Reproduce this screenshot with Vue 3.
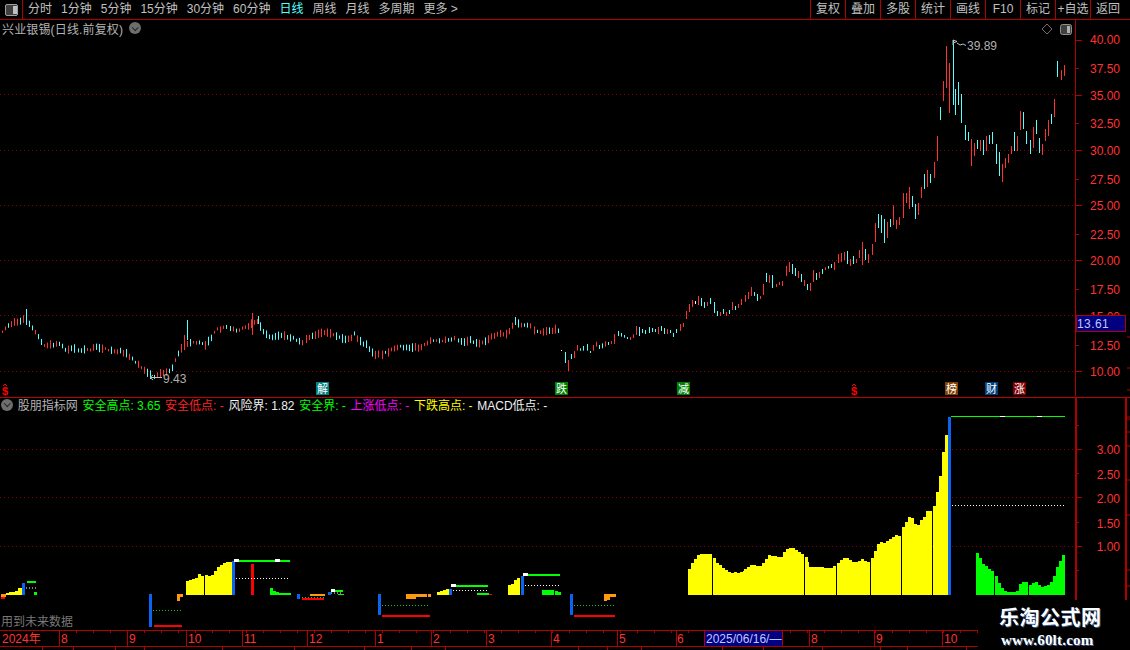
<script setup>
const menu = [
  { t: '分时' }, { t: '1分钟' }, { t: '5分钟' }, { t: '15分钟' }, { t: '30分钟' }, { t: '60分钟' },
  { t: '日线', on: true }, { t: '周线' }, { t: '月线' }, { t: '多周期' }, { t: '更多 >' }
]
const tools = ['复权', '叠加', '多股', '统计', '画线', 'F10', '标记', '+自选', '返回']
const legend = [
  { t: '安全高点: 3.65', c: 'g' }, { t: '安全低点: -', c: 'r' }, { t: '风险界: 1.82', c: 'w' },
  { t: '安全界: -', c: 'g' }, { t: '上涨低点: -', c: 'm' }, { t: '下跌高点: -', c: 'y' }, { t: 'MACD低点: -', c: 'w' }
]
const RED = '#ff3232', CY = '#54ffff'

// left part of the price line: key points, filled in candle by candle
const keys = [[1,332],[8,325],[15,322],[22,321],[26,316],[29,323],[33,330],[38,337],[44,346],[52,345],[60,344],[66,350],[72,348],[80,351],[90,349],[98,347],[108,350],[118,351],[125,353],[133,360],[140,366],[148,373],[155,377],[160,373],[167,372],[172,367],[177,355],[183,345],[190,343],[200,342],[206,345],[216,330],[226,327],[236,330],[245,328],[252,324],[258,322],[262,330],[270,338],[278,335],[290,337],[302,342],[310,337],[320,334],[330,333],[340,338],[350,340],[354,334],[360,342],[366,345],[372,352],[376,355],[382,354],[392,350],[400,347],[410,347],[420,348],[432,340],[445,340],[455,338],[462,342],[470,340],[480,345],[490,337],[500,333],[505,335],[510,330],[515,321],[522,326],[530,326],[535,332],[540,332],[550,330],[558,330]]
function centre(x) {
  for (let i = 1; i < keys.length; i++) {
    if (x <= keys[i][0]) {
      const [a, b] = [keys[i - 1], keys[i]]
      return a[1] + (b[1] - a[1]) * (x - a[0]) / (b[0] - a[0])
    }
  }
  return keys[keys.length - 1][1]
}
let seed = 7
const rnd = () => (seed = (seed * 16807) % 2147483647) / 2147483647
const candles = []
for (let i = 0; i * 3.04 + 1.5 < 560; i++) {
  const x = Math.round(i * 3.04 + 1.5)
  const m = centre(x), up = centre(x + 3) < m
  const h = 1.2 + rnd() * 3.3
  const off = (rnd() - 0.5) * 2
  candles.push({ x, t: m + off - h, b: m + off + h, c: rnd() < (up ? 0.7 : 0.35) ? RED : CY })
}
const spikes = [[26, 309, 325, CY], [184, 335, 350, RED], [187, 320, 340, CY], [252, 313, 335, RED], [258, 316, 324, CY], [515, 317, 325, CY]]
spikes.forEach(s => candles.push({ x: s[0], t: s[1], b: s[2], c: s[3] }))

const a = [[561,350,351,'#fff'],[565,352,363,CY],[568,360,371,RED],[571,354,359,CY],[574,351,358,RED]]
a.forEach(s => candles.push({ x: s[0], t: s[1], b: s[2], c: s[3] }))
const z8 = `112,195,212,r 121,205,212,c 130,198,212,c 142,192,212,c 151,213,219,c 160,195,212,r 169,185,200,r 178,195,207,c 187,190,205,c 196,184,200,r 205,186,195,c 214,183,192,r 223,162,192,r 235,153,168,c 244,159,170,c 253,165,173,c 262,171,177,c 271,171,180,r 280,163,174,r 289,138,165,r 298,141,168,c 307,147,159,c 316,150,162,c 328,141,159,c 337,144,156,c 346,147,156,c 355,141,162,r 364,138,153,c 373,144,162,c 382,147,162,r 391,150,159,c 400,159,171,c 409,147,159,c 421,132,153,r 430,129,141,r 439,93,117,r 448,72,96,r 457,60,81,r 466,63,72,w 475,48,75,r 484,54,78,c 493,66,84,c 502,66,78,r 511,54,72,c 523,66,99,c 532,93,108,c 541,96,108,r 550,87,102,c 559,96,108,r 568,90,102,c 577,66,90,r 586,78,90,c 595,72,84,r 604,57,75,r 616,45,66,r 625,36,57,r 634,21,48,r 643,36,48,c 652,42,63,c 661,48,57,r 670,12,45,r 679,-21,6,c 688,-15,9,r 697,-15,24,c 709,12,21,r 718,6,15,r 727,3,18,r`
const colourOf = { r: RED, c: CY, w: '#fff' }
z8.split(' ').forEach(s => {
  const [x, t, b, c] = s.split(',')
  candles.push({ x: Math.round(540 + x / 3), t: 280 + t / 3, b: 280 + b / 3, c: colourOf[c] })
})
const mid = `786,266,276,r 789,262,272,r 792,264,274,c 795,268,276,c 798,271,278,r 801,274,282,c 804,280,286,r 807,284,290,c 810,283,291,r 813,270,282,r 816,273,280,c 819,272,278,r 822,269,274,c`
mid.split(' ').forEach(s => {
  const [x, t, b, c] = s.split(',')
  candles.push({ x: +x, t: +t, b: +b, c: colourOf[c] })
})
const z9 = `16,412,420,r 25,408,416,c 34,402,414,c 43,396,420,r 55,372,399,r 64,369,396,r 73,366,390,r 82,363,402,c 91,387,408,r 100,378,402,c 109,387,399,r 118,360,384,r 127,336,405,r 136,357,390,c 145,372,399,r 157,342,375,r 166,279,336,r 175,252,294,c 184,255,309,c 193,267,339,c 202,276,324,r 211,267,291,c 220,226,285,r 229,270,297,r 238,261,285,r 250,189,264,r 259,189,219,r 268,171,237,r 277,198,231,c 286,222,267,c 295,219,255,r 304,171,204,r 313,132,177,c 322,120,171,r 331,132,159,c 343,96,144,r 352,18,93,r 436,-15,30,c 445,6,33,c 454,27,108,r 463,39,78,r 472,30,57,c 481,30,63,r 490,30,75,c 499,18,63,r 508,15,42,c 517,6,42,c 529,42,102,c 538,66,138,c 547,102,156,r 556,84,114,r 565,72,99,r 574,48,72,r 583,6,63,c 592,18,63,r 619,3,42,c 631,30,72,c 640,-9,54,r 649,-30,12,c 658,24,69,c 667,42,75,r 676,-3,33,r 685,-30,18,r`
z9.split(' ').forEach(s => {
  const [x, t, b, c] = s.split(',')
  candles.push({ x: Math.round(820 + x / 3), t: 130 + t / 3, b: 130 + b / 3, c: colourOf[c] })
})
const top = `940,107,120,c 943,81,101,r 946,46,88,r 949,63,113,r 953,40,105,c 955,89,115,c 958,82,105,c 961,94,123,c 1020,111,130,r 1023,112,129,c 1057,61,77,c 1061,70,80,r 1064,65,76,r 1051,114,124,c 1054,99,117,r`
top.split(' ').forEach(s => {
  const [x, t, b, c] = s.split(',')
  candles.push({ x: +x, t: +t, b: +b, c: colourOf[c] })
})

const priceGrid = [94.5, 150.5, 205.5, 260.5, 315.5, 371.5]
const prices = [['40.00',39.5],['37.50',68],['35.00',95],['32.50',123],['30.00',150],['27.50',179],['25.00',205],['22.50',234],['20.00',260],['17.50',289],['15.00',316],['12.50',345],['10.00',371]]
const badges = [
  { x: 316, w: 13, t: '解', bg: '#008080' }, { x: 555, w: 13, t: '跌', bg: '#008000' },
  { x: 677, w: 13, t: '减', bg: '#008000' }, { x: 945, w: 13, t: '榜', bg: '#804000' },
  { x: 985, w: 13, t: '财', bg: '#004080' }, { x: 1013, w: 13, t: '涨', bg: '#800000' }
]

// lower panel: columns as [x, top]
const step = (x0, tops, dx = 3.04) => tops.map((t, i) => [Math.round(x0 + i * dx), t])
const yellow = [
  ...step(3, [594, 593, 592, 592, 591, 588, 588]),
  ...step(186, [581, 580, 579, 578, 574, 576]),
  ...step(205, [575, 576, 575, 571, 567, 565, 563, 562, 562]),
  ...step(437, [592, 591, 590, 589]),
  ...step(508, [585, 584, 580, 578]),
  ...step(688, [569, 563, 559, 555, 554, 554, 554, 554]),
  ...step(713, [558, 563, 565, 568, 570, 572, 573, 572, 573, 572, 571]),
  ...step(744, [569, 567, 565, 565, 566, 566, 563]),
  ...step(765, [559, 555, 556, 556, 557, 557, 552, 549, 548, 548, 550, 552, 554, 557]),
  ...step(806, [562, 567, 567, 567, 567, 567, 568, 568, 568, 566]),
  ...step(837, [563, 560, 558, 558, 560, 562, 562, 561, 559, 561, 562]),
  ...step(871, [558, 551, 544, 542, 543, 541, 539, 537, 535, 536]),
  ...step(902, [527, 522, 517, 518, 524, 525, 520, 517, 511, 511]),
  ...step(933, [506, 492, 476, 452, 435])
]
const green = [
  ...step(270, [588, 591, 592, 593, 593, 593, 593]),
  ...step(542, [590, 590, 590, 590]), ...step(555, [591, 592]),
  ...step(976, [553, 558, 564, 566, 569, 571]),
  ...step(995, [576, 583, 588, 591, 592, 592, 592, 591, 584, 582, 582]),
  ...step(1029, [585, 583, 582, 585, 587, 586, 585, 582, 576, 567, 561, 555])
]
const blocks = [
  [22, 583, 3, 12, '#0a64f0'], [232, 561, 3, 34, '#0a64f0'], [297, 594, 3, 5, '#0a64f0'], [328, 592, 3, 3, '#0a64f0'],
  [149, 594, 3, 33, '#0a64f0'], [378, 594, 3, 21, '#0a64f0'], [449, 589, 3, 6, '#0a64f0'], [521, 576, 3, 19, '#0a64f0'],
  [570, 594, 3, 21, '#0a64f0'], [948, 417, 3, 178, '#0a64f0'],
  [251, 564, 3, 31, '#ff0000'], [154, 625, 28, 2, '#ff0000'], [382, 615, 48, 2, '#ff0000'], [574, 615, 41, 2, '#ff0000'],
  [302, 598, 22, 2, '#ff0000'], [1, 597, 4, 2, '#ff0000'], [488, 594, 4, 1, '#ff0000'],
  [27, 581, 9, 2, '#00ff00'], [34, 592, 3, 3, '#00ff00'], [236, 560, 54, 2, '#00ff00'], [334, 590, 9, 2, '#00ff00'], [338, 594, 6, 1, '#00ff00'],
  [453, 585, 35, 2, '#00ff00'], [477, 593, 12, 2, '#00ff00'], [525, 574, 35, 2, '#00ff00'], [951, 416, 114, 1, '#00ff00'],
  [1, 594, 5, 3, '#ff9a10'], [177, 594, 6, 3, '#ff9a10'], [177, 597, 3, 4, '#ff9a10'], [310, 594, 15, 2, '#ff9a10'],
  [406, 594, 21, 3, '#ff9a10'], [406, 597, 10, 2, '#ff9a10'], [428, 594, 3, 3, '#ff9a10'],
  [604, 594, 12, 3, '#ff9a10'], [604, 597, 6, 3, '#ff9a10'], [604, 600, 3, 1, '#ff9a10'],
  [234, 559, 5, 3, '#fff'], [275, 559, 5, 3, '#fff'], [331, 589, 4, 3, '#fff'], [451, 584, 5, 3, '#fff'], [523, 573, 5, 3, '#fff'],
  [1000, 416, 5, 1, '#fff'], [1037, 416, 5, 1, '#fff']
]
const dots = [
  [26, 36, 588, '#fff'], [236, 290, 578.5, '#fff'], [331, 343, 593, '#fff'], [453, 488, 590.5, '#fff'], [525, 560, 585.5, '#fff'], [952, 1065, 505.5, '#fff'],
  [153, 182, 610.5, '#20c020'], [302, 324, 597.5, '#20c020'], [382, 430, 605.5, '#20c020'], [574, 615, 605.5, '#20c020']
]
const lowGrid = [449.5, 497.5, 546.5]
const lowPrices = [['3.00', 449], ['2.50', 474], ['2.00', 498], ['1.50', 523], ['1.00', 546]]
const lowTicks = [[449.5, 6], [473.5, 3], [497.5, 6], [522.5, 3], [546.5, 6], [570.5, 3], [425.5, 3]]
const dividers = [59, 127, 186, 242, 307, 375, 431, 486, 551, 617, 676, 704, 782, 809, 874, 942]
const months = [['2024年', 2], ['8', 61], ['9', 129], ['10', 188], ['11', 244], ['12', 309], ['1', 377], ['2', 433], ['3', 488], ['4', 553], ['5', 619], ['6', 677], ['8', 811], ['9', 876], ['10', 944]]
const minors = []
for (let x = 76; x < 978; x += 17) minors.push(x)
const under = [42, 73, 115, 144, 222, 294, 364, 411, 445, 578, 607, 641, 722, 763, 822, 880, 907, 966]
</script>

<template>
  <div class="screen">
    <header class="topbar">
      <div class="toggle"><span class="panel-icon"><i></i></span></div>
      <nav class="menu">
        <span v-for="m in menu" :key="m.t" :class="{ on: m.on }">{{ m.t }}</span>
      </nav>
      <div class="tools">
        <span v-for="t in tools" :key="t" class="tool">{{ t }}</span>
      </div>
    </header>

    <section class="panel main">
      <svg width="1130" height="377" viewBox="0 20 1130 377" class="chart">
        <line v-for="y in priceGrid" :key="y" x1="0" x2="1076" :y1="y" :y2="y" class="grid" />
        <line v-for="c in candles" :key="c.x + '-' + c.t" :x1="c.x + .5" :x2="c.x + .5" :y1="c.t" :y2="c.b" :stroke="c.c" stroke-width="1" />
        <line x1="1075.5" x2="1075.5" y1="20" y2="396" class="axis" />
        <g v-for="(p, i) in prices" :key="p[0]">
          <line x1="1076" :x2="i % 2 ? 1079 : 1082" :y1="Math.round(p[1]) + .5" :y2="Math.round(p[1]) + .5" class="axis" />
          <text x="1120" :y="p[1] + 4.5" text-anchor="end" class="tick">{{ p[0] }}</text>
        </g>
        <path d="M1127 337h3M1127 368h3M1127 390h3" class="axis" />

        <rect x="1076.5" y="315.5" width="49" height="16" fill="#000080" stroke="#b00000" />
        <text x="1077" y="328" class="last">13.61</text>

        <path d="M953 45v-5l4 1.5-4 1.5M957 43l3 2 3-1 3 1.5" class="flag" />
        <text x="967" y="50" class="note">39.89</text>
        <path d="M162 377.5h-12m3-2.500-3 2.500 3 2.500" class="flag" />
        <text x="163" y="383" class="note">9.43</text>

        <path d="M3 386l2-2 2 2M852 386l2-2 2 2" fill="none" stroke="#ff0000" />
        <text x="2" y="395" class="dollar">$</text>
        <text x="851" y="395" class="dollar">$</text>
        <g v-for="b in badges" :key="b.t">
          <rect :x="b.x" y="382" :width="b.w" height="13" :fill="b.bg" />
          <text :x="b.x + b.w / 2" y="393" text-anchor="middle" class="badge">{{ b.t }}</text>
        </g>

        <path d="M1047 24l5 5-5 5-5-5z" fill="none" stroke="#707070" />
        <rect x="1060.500" y="24.500" width="11" height="10" rx="2" fill="#404040" stroke="#909090" />
        <rect x="1067" y="26" width="3" height="7" fill="#b0b0b0" />
      </svg>
      <div class="title">
        <span>兴业银锡(日线.前复权)</span>
        <span class="chev"></span>
      </div>
    </section>

    <section class="panel lower">
      <svg width="1130" height="253" viewBox="0 397 1130 253" class="chart">
        <rect y="397" width="1130" height="1" fill="#c00000" x="0" />
        <line v-for="y in lowGrid" :key="y" x1="0" x2="1076" :y1="y" :y2="y" class="grid" />
        <rect v-for="b in yellow" :key="'y' + b[0]" :x="b[0]" :y="b[1]" width="3" :height="595 - b[1]" fill="#ffff00" />
        <rect v-for="b in green" :key="'g' + b[0]" :x="b[0]" :y="b[1]" width="3" :height="595 - b[1]" fill="#00ff00" />
        <rect v-for="(b, i) in blocks" :key="'b' + i" :x="b[0]" :y="b[1]" :width="b[2]" :height="b[3]" :fill="b[4]" />
        <line v-for="(d, i) in dots" :key="'d' + i" :x1="d[0]" :x2="d[1]" :y1="d[2]" :y2="d[2]" :stroke="d[3]" stroke-dasharray="1 2" />

        <rect x="1075" y="397" width="2" height="203" fill="#b00000" />
        <rect x="1125" y="397" width="2" height="203" fill="#b00000" />
        <g v-for="p in lowPrices" :key="p[0]">
          <text x="1120" :y="p[1] + 4.500" text-anchor="end" class="tick">{{ p[0] }}</text>
        </g>
        <line v-for="t in lowTicks" :key="t[0]" x1="1076" :x2="1076 + t[1]" :y1="t[0]" :y2="t[0]" class="axis" />
        <path d="M1127 417h3M1127 419h3M1127 432h3M1127 446h3M1127 480h3M1127 515h3M1127 570h3M1127 586h3" class="axis" />

        <text x="1" y="626" class="hint">用到未来数据</text>

        <line x1="0" x2="978" y1="630.500" y2="630.500" class="axis" />
        <line x1="0" x2="978" y1="646.500" y2="646.500" class="axis" />
        <line v-for="x in dividers" :key="'v' + x" :x1="x + .5" :x2="x + .5" y1="630" y2="646" class="axis" />
        <line v-for="x in minors" :key="'m' + x" :x1="x + .5" :x2="x + .5" y1="630" y2="633" class="axis" />
        <line v-for="x in under" :key="'u' + x" :x1="x + .5" :x2="x + .5" y1="646" y2="650" class="axis" />
        <text v-for="m in months" :key="m[0] + m[1]" :x="m[1]" y="643" class="tick">{{ m[0] }}</text>
        <rect x="705" y="631" width="77" height="15" fill="#000080" />
        <text x="706" y="643" class="stamp">2025/06/16/—</text>
      </svg>
      <div class="legend">
        <span class="chev"></span>
        <span class="name">股朋指标网</span>
        <span v-for="l in legend" :key="l.t" :class="l.c">{{ l.t }}</span>
      </div>
    </section>

    <aside class="mark">
      <strong>乐淘公式网</strong>
      <em>www.60lt.com</em>
    </aside>
  </div>
</template>

<style>
html, body { margin: 0; background: #000; }
</style>

<style scoped>
.screen {
  position: relative;
  width: 1130px;
  height: 650px;
  overflow: hidden;
  background: #000;
  color: #c0c0c0;
  font: 12px "Liberation Sans", "Noto Sans CJK SC", sans-serif;
}
.topbar {
  display: flex;
  height: 19px;
  border-bottom: 1px solid #b00000;
  line-height: 19px;
}
.toggle {
  width: 23px;
  box-sizing: border-box;
  border-right: 1px solid #b00000;
  display: flex;
  align-items: center;
  justify-content: center;
}
.panel-icon {
  display: block;
  position: relative;
  width: 11px;
  height: 10px;
  border: 1px solid #a0a0a0;
  border-radius: 2px;
  background: #404040;
}
.panel-icon i {
  position: absolute;
  right: 0;
  top: 1px;
  width: 4px;
  height: 8px;
  background: #c0c0c0;
}
.menu {
  display: flex;
  gap: 9px;
  margin-left: 5px;
  flex: 1;
}
.menu .on { color: #54ffff; }
.tools {
  display: flex;
  width: 320px;
}
.tool {
  flex: 0 0 35px;
  box-sizing: border-box;
  border-left: 1px solid #b00000;
  text-align: center;
}
.tool:last-child {
  flex: 1;
  padding-right: 5px;
}
.panel { position: relative; }
.main { height: 377px; }
.lower { height: 253px; }
.chart { display: block; }
.grid { stroke: #8c0000; stroke-dasharray: 1 3; shape-rendering: crispEdges; }
.axis { stroke: #b00000; fill: none; }
.tick { fill: #ff3232; font-size: 12px; font-family: "Liberation Sans", "Noto Sans CJK SC", sans-serif; }
.last { fill: #c0c8ff; font-size: 12px; letter-spacing: .4px; font-family: "Liberation Sans", sans-serif; }
.stamp { fill: #c0c8ff; font-size: 12px; font-family: "Liberation Sans", "Noto Sans CJK SC", sans-serif; }
.note { fill: #b0b0b0; font-size: 12px; font-family: "Liberation Sans", sans-serif; }
.hint { fill: #787878; font-size: 12px; font-family: "Noto Sans CJK SC", sans-serif; }
.flag { fill: none; stroke: #c0c0c0; }
.dollar { fill: #ff0000; font-size: 11px; font-weight: 700; font-family: "Liberation Sans", sans-serif; }
.badge { fill: #fff; font-size: 11px; font-family: "Noto Sans CJK SC", sans-serif; }
.title {
  position: absolute;
  left: 2px;
  top: -1px;
  display: flex;
  align-items: center;
  gap: 6px;
  height: 18px;
  color: #b4b4b4;
  font-size: 12px;
  letter-spacing: .15px;
}
.chev {
  position: relative;
  display: inline-block;
  width: 12px;
  height: 12px;
  border-radius: 50%;
  background: #6e6e6e;
}
.chev::after {
  content: "";
  position: absolute;
  left: 3.500px;
  top: 2.500px;
  width: 3.500px;
  height: 3.500px;
  border-right: 1.500px solid #202020;
  border-bottom: 1.500px solid #202020;
  transform: rotate(45deg);
}
.legend {
  position: absolute;
  left: 1px;
  top: 0;
  display: flex;
  align-items: center;
  gap: 4.700px;
  height: 15px;
  white-space: nowrap;
}
.legend .name { color: #b4b4b4; }
.g { color: #00ff00; }
.r { color: #ff2020; }
.w { color: #f0f0f0; }
.m { color: #ff00ff; }
.y { color: #ffff00; }
.mark {
  position: absolute;
  left: 978px;
  top: 600px;
  width: 152px;
  height: 50px;
  background: #000;
  color: #fff;
}
.mark strong {
  position: absolute;
  left: 21px;
  top: 5px;
  letter-spacing: .5px;
  font: 700 20px/24px "Noto Sans CJK SC", sans-serif;
  text-shadow: 1px 1px 0 #3a5a8a;
}
.mark em {
  position: absolute;
  left: 23px;
  top: 31px;
  font: 700 15px/18px "Liberation Serif", serif;
  font-style: normal;
  letter-spacing: .2px;
  text-shadow: 1px 1px 0 #3a5a8a;
}
</style>
